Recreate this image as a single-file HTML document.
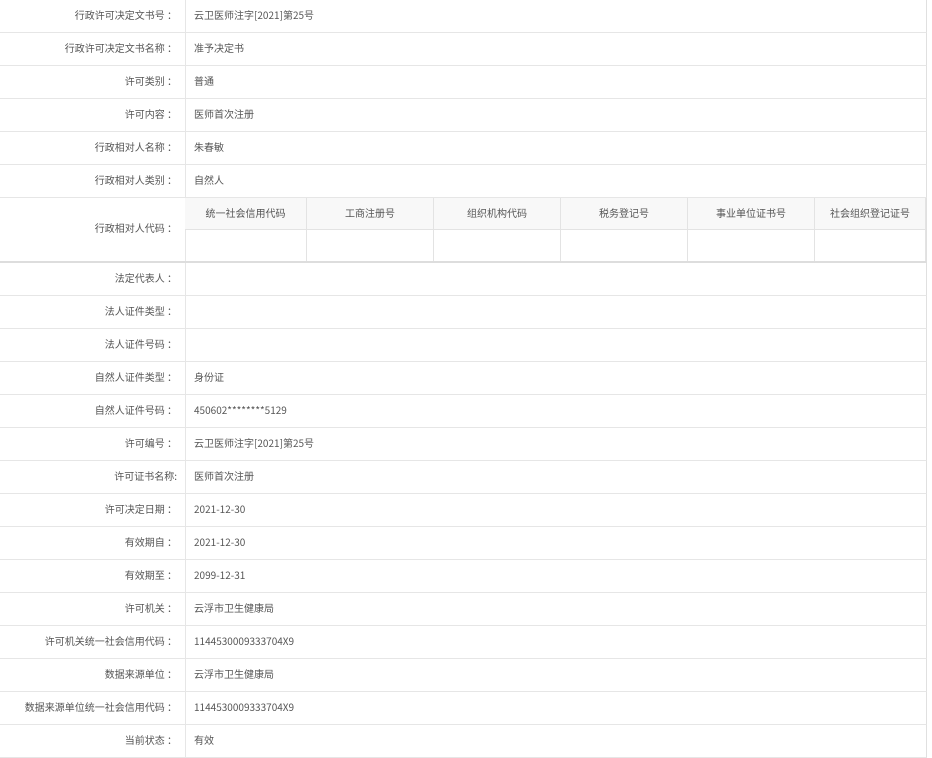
<!DOCTYPE html>
<html><head><meta charset="utf-8"><style>
*{margin:0;padding:0;box-sizing:border-box}
body{width:932px;height:757px;background:#fff;font-family:"Noto Sans CJK SC","Liberation Sans",sans-serif;font-size:10px;color:#555;position:relative;overflow:hidden}
.r{position:absolute;left:0;width:927px;border-bottom:1px solid #e6e6e6;border-right:1px solid #e0e0e0}
.l{position:absolute;left:0;top:0;bottom:0;width:186px;background:#fff;border-right:1px solid #e6e6e6;text-align:right;padding-right:8px}
.v{position:absolute;left:194px;top:0;bottom:0}
.c{display:flex;align-items:center;padding-bottom:3px;line-height:12px}
.l.c{justify-content:flex-end}
.h{position:absolute;top:0;height:32px;background:#f8f8f8;border-right:1px solid #e3e3e3;border-bottom:1px solid #e3e3e3;display:flex;align-items:center;justify-content:center;padding-bottom:3px}
.b{position:absolute;top:32px;height:31px;border-right:1px solid #e3e3e3}
</style></head><body>
<div id="w"></div>
<script>
var rows=[["行政许可决定文书号 ：","云卫医师注字[2021]第25号"],["行政许可决定文书名称 ：","准予决定书"],["许可类别 ：","普通"],["许可内容 ：","医师首次注册"],["行政相对人名称 ：","朱春敏"],["行政相对人类别 ：","自然人"],null,["法定代表人 ：",""],["法人证件类型 ：",""],["法人证件号码 ：",""],["自然人证件类型 ：","身份证"],["自然人证件号码 ：","450602********5129"],["许可编号 ：","云卫医师注字[2021]第25号"],["许可证书名称:","医师首次注册"],["许可决定日期 ：","2021-12-30"],["有效期自 ：","2021-12-30"],["有效期至 ：","2099-12-31"],["许可机关 ：","云浮市卫生健康局"],["许可机关统一社会信用代码 ：","1144530009333704X9"],["数据来源单位 ：","云浮市卫生健康局"],["数据来源单位统一社会信用代码 ：","1144530009333704X9"],["当前状态 ：","有效"]];
var h="",y=0;
rows.forEach(function(r){
if(!r){
var cols=[185,307,434,561,688,815,926],names=["统一社会信用代码","工商注册号","组织机构代码","税务登记号","事业单位证书号","社会组织登记证号"];
h+='<div class="r" style="top:'+y+'px;height:65px;border-bottom:2px solid #ddd"><div class="l c">行政相对人代码 ：</div>';
for(var i=0;i<6;i++){h+='<div class="h" style="left:'+cols[i]+'px;width:'+(cols[i+1]-cols[i])+'px">'+names[i]+'</div><div class="b" style="left:'+cols[i]+'px;width:'+(cols[i+1]-cols[i])+'px"></div>';}
h+='</div>';y+=65;return;}
h+='<div class="r" style="top:'+y+'px;height:33px"><div class="l c">'+r[0]+'</div><div class="v c">'+r[1]+'</div></div>';y+=33;});
document.getElementById("w").innerHTML=h;
</script>
</body></html>
